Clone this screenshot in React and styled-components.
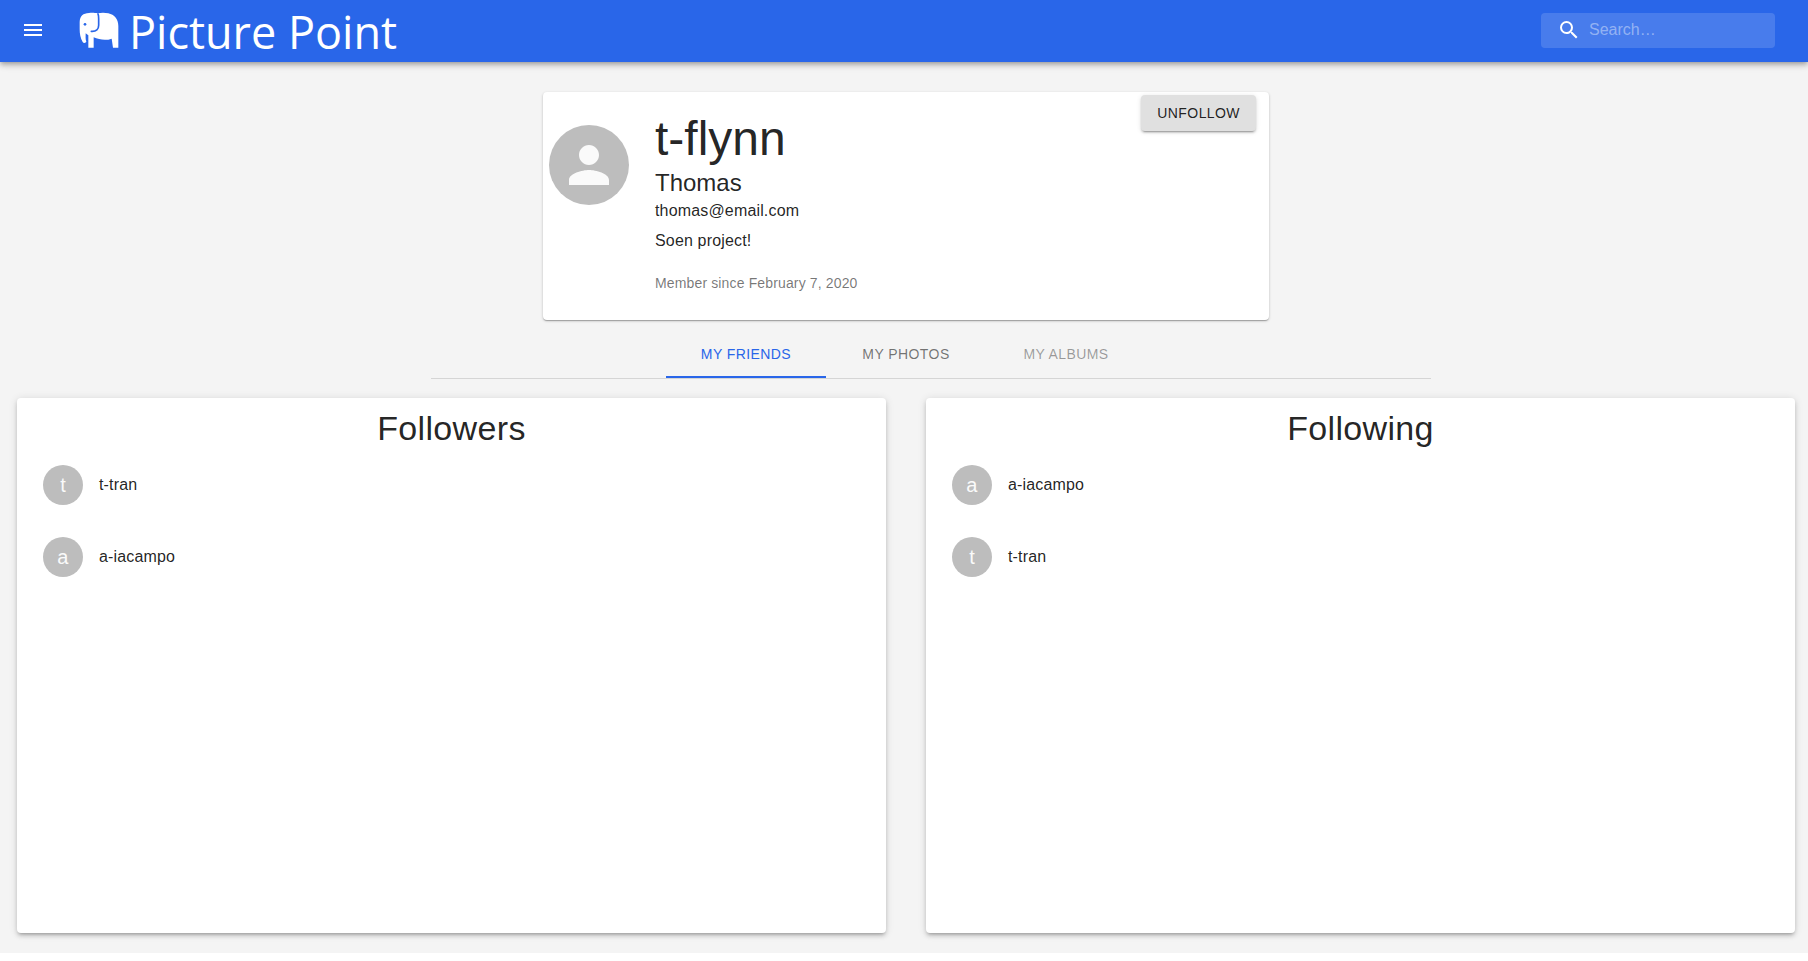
import React, { useState } from "react";
import styled, { createGlobalStyle } from "styled-components";
import { MdMenu, MdSearch, MdPerson } from "react-icons/md";

const GlobalStyle = createGlobalStyle`
  *, *::before, *::after { box-sizing: border-box; }
  body {
    margin: 0;
    background: #ffffff;
    color: rgba(0, 0, 0, 0.87);
    font-family: "Liberation Sans", Arial, sans-serif;
  }
  button, input { font-family: inherit; }
`;

const Page = styled.div`
  display: flex;
  flex-direction: column;
  min-height: calc(100vh - 8px);
  background: #f4f4f4;
`;

const AppBar = styled.header`
  display: flex;
  align-items: center;
  height: 62px;
  padding: 0 33px 2px 9px;
  background: #2966e9;
  color: #ffffff;
  box-shadow: 0 2px 4px -1px rgba(0, 0, 0, 0.2), 0 4px 5px rgba(0, 0, 0, 0.14),
    0 1px 10px rgba(0, 0, 0, 0.12);
`;

const MenuButton = styled.button`
  display: flex;
  padding: 12px;
  margin-right: 22px;
  border: 0;
  border-radius: 50%;
  background: transparent;
  color: inherit;
  cursor: pointer;
`;

const Brand = styled.a`
  display: flex;
  align-items: center;
  gap: 10px;
  color: inherit;
  text-decoration: none;
`;

const BrandName = styled.span`
  padding-top: 4px;
  font-family: "Segoe UI", "Open Sans", "Noto Sans", sans-serif;
  font-size: 45px;
  line-height: 56px;
  white-space: nowrap;
`;

const SearchBox = styled.label`
  display: flex;
  align-items: center;
  width: 234px;
  height: 35px;
  margin-left: auto;
  padding-left: 16px;
  border-radius: 4px;
  background: rgba(255, 255, 255, 0.15);

  svg { flex: none; }
`;

const SearchInput = styled.input`
  flex: 1;
  min-width: 0;
  padding: 0 8px;
  border: 0;
  outline: 0;
  background: transparent;
  color: inherit;
  font-size: 16px;

  &::placeholder { color: rgba(255, 255, 255, 0.42); }
`;

const Main = styled.main`
  display: flex;
  flex: 1;
  flex-direction: column;
  padding: 30px 13px 20px 17px;
`;

const Paper = styled.section`
  border-radius: 4px;
  background: #ffffff;
`;

const ProfileCard = styled(Paper)`
  display: flex;
  align-items: flex-start;
  width: 100%;
  max-width: 726px;
  margin: 0 auto;
  padding: 3px 13px 27px 6px;
  box-shadow: 0 1px 3px rgba(0, 0, 0, 0.2), 0 1px 1px rgba(0, 0, 0, 0.14),
    0 2px 1px -1px rgba(0, 0, 0, 0.12);
`;

const Avatar = styled.span`
  display: flex;
  flex: none;
  align-items: center;
  justify-content: center;
  width: ${(p) => (p.$large ? 80 : 40)}px;
  height: ${(p) => (p.$large ? 80 : 40)}px;
  margin-top: ${(p) => (p.$large ? 30 : 0)}px;
  border-radius: 50%;
  background: #bdbdbd;
  color: #fafafa;
  font-size: 20px;
`;

const ProfileDetails = styled.div`
  flex: 1;
  padding: 19px 0 0 26px;
  font-size: 16px;
  letter-spacing: 0.01em;
  line-height: 24px;
`;

const Username = styled.h1`
  margin: 0 0 3px;
  font-size: 48px;
  font-weight: 400;
  letter-spacing: normal;
  line-height: 50px;
`;

const FullName = styled.h2`
  margin: 0;
  font-size: 24px;
  font-weight: 400;
  letter-spacing: normal;
  line-height: 32px;
`;

const Line = styled.p`
  margin: 0 0 6px;
`;

const MemberSince = styled.p`
  margin: 20px 0 0;
  color: rgba(0, 0, 0, 0.54);
  font-size: 14px;
  letter-spacing: 0.01em;
  line-height: 20px;
`;

const FollowButton = styled.button`
  height: 36px;
  padding: 0 16px;
  border: 0;
  border-radius: 4px;
  background: #e0e0e0;
  box-shadow: 0 3px 1px -2px rgba(0, 0, 0, 0.2), 0 2px 2px rgba(0, 0, 0, 0.14),
    0 1px 5px rgba(0, 0, 0, 0.12);
  color: rgba(0, 0, 0, 0.87);
  font-size: 14px;
  letter-spacing: 0.03em;
  text-transform: uppercase;
  cursor: pointer;
`;

const TabArea = styled.div`
  padding-left: 50px;
  margin: 10px 0 19px;
`;

const TabList = styled.div`
  display: flex;
  justify-content: center;
  max-width: 1000px;
  margin: 0 auto;
  padding-right: 50px;
  border-bottom: 1px solid #d5d5d5;
`;

const Tab = styled.button`
  width: 160px;
  height: 48px;
  padding: 2px 12px 0;
  border: 0;
  border-bottom: 2px solid ${(p) => (p.$active ? "#2966e9" : "transparent")};
  background: transparent;
  color: ${(p) => (p.$active ? "#2966e9" : "rgba(0, 0, 0, 0.54)")};
  font-size: 14px;
  letter-spacing: 0.03em;
  text-transform: uppercase;
  cursor: pointer;

  &:disabled {
    color: rgba(0, 0, 0, 0.38);
    cursor: default;
  }
`;

const Panels = styled.div`
  display: grid;
  flex: 1;
  grid-template-columns: 1fr 1fr;
  gap: 40px;
`;

const PeoplePanel = styled(Paper)`
  padding: 10px 26px;
  box-shadow: 0 3px 3px -2px rgba(0, 0, 0, 0.2), 0 3px 4px rgba(0, 0, 0, 0.14),
    0 1px 8px rgba(0, 0, 0, 0.12);
`;

const PanelTitle = styled.h2`
  margin: 0 0 1px;
  font-size: 34px;
  font-weight: 400;
  letter-spacing: 0.01em;
  line-height: 40px;
  text-align: center;
`;

const PeopleList = styled.ul`
  margin: 0;
  padding: 0;
  list-style: none;
`;

const PersonLink = styled.a`
  display: flex;
  align-items: center;
  gap: 16px;
  padding: 16px 0;
  color: inherit;
  font-size: 16px;
  letter-spacing: 0.01em;
  line-height: 24px;
  text-decoration: none;
`;

function ElephantLogo() {
  return (
    <svg width="40" height="36" viewBox="0 0 120 108" aria-hidden="true">
      <path
        fill="#ffffff"
        d="M2 30C3 11 12 4 30 3C42 2 48 3 56 4C66 2 78 2 88 4C106 8 118 22 118 42V107H102L98 80C82 86 61 84 44 76V107H28V70L20 64C20 74 19 82 22 89C18 94 14 94 11 90C4 79 2 65 2 52Z"
      />
      <path
        fill="none"
        stroke="#2966e9"
        strokeWidth="5"
        strokeLinecap="round"
        d="M57 6C59 9 59 14 59 20V40C59 52 52 59 37 58"
      />
      <circle cx="18" cy="37" r="4" fill="#2966e9" />
    </svg>
  );
}

function People({ title, names }) {
  return (
    <PeoplePanel>
      <PanelTitle>{title}</PanelTitle>
      <PeopleList>
        {names.map((name) => (
          <li key={name}>
            <PersonLink href={`#${name}`}>
              <Avatar aria-hidden="true">{name[0]}</Avatar>
              {name}
            </PersonLink>
          </li>
        ))}
      </PeopleList>
    </PeoplePanel>
  );
}

const tabs = [
  { label: "My Friends" },
  { label: "My Photos" },
  { label: "My Albums", disabled: true },
];

export default function App() {
  const [active, setActive] = useState(0);

  return (
    <Page>
      <GlobalStyle />
      <AppBar>
        <MenuButton type="button" aria-label="Menu">
          <MdMenu size={24} />
        </MenuButton>
        <Brand href="#home">
          <ElephantLogo />
          <BrandName>Picture Point</BrandName>
        </Brand>
        <SearchBox>
          <MdSearch size={24} />
          <SearchInput type="text" placeholder="Search…" aria-label="Search" />
        </SearchBox>
      </AppBar>
      <Main>
        <ProfileCard>
          <Avatar $large>
            <MdPerson size={60} />
          </Avatar>
          <ProfileDetails>
            <Username>t-flynn</Username>
            <FullName>Thomas</FullName>
            <Line>thomas@email.com</Line>
            <Line>Soen project!</Line>
            <MemberSince>Member since February 7, 2020</MemberSince>
          </ProfileDetails>
          <FollowButton type="button">Unfollow</FollowButton>
        </ProfileCard>
        <TabArea>
          <TabList role="tablist">
            {tabs.map((tab, i) => (
              <Tab
                key={tab.label}
                type="button"
                role="tab"
                aria-selected={i === active}
                disabled={tab.disabled}
                $active={i === active}
                onClick={() => setActive(i)}
              >
                {tab.label}
              </Tab>
            ))}
          </TabList>
        </TabArea>
        <Panels>
          <People title="Followers" names={["t-tran", "a-iacampo"]} />
          <People title="Following" names={["a-iacampo", "t-tran"]} />
        </Panels>
      </Main>
    </Page>
  );
}
